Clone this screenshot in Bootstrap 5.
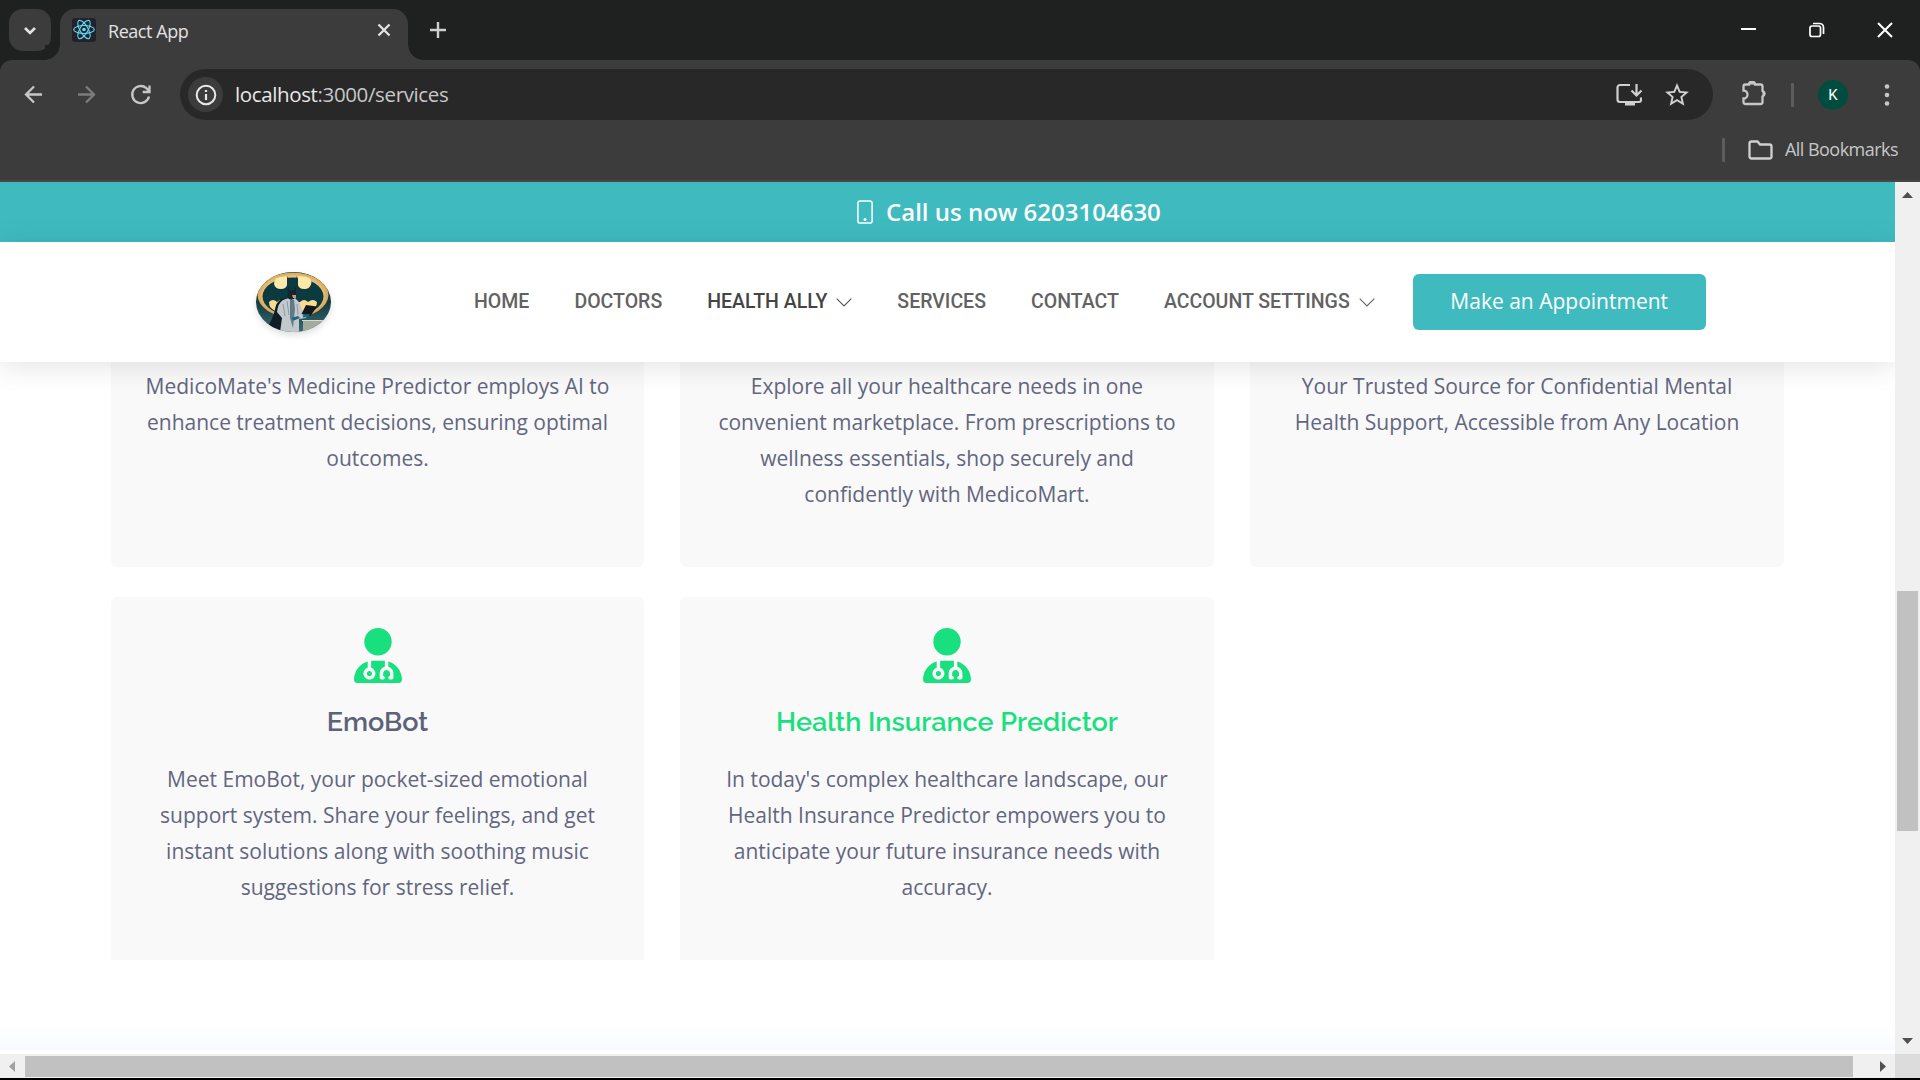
<!DOCTYPE html>
<html lang="en">
<head>
<meta charset="utf-8">
<title>React App</title>
<link href="https://cdn.jsdelivr.net/npm/bootstrap@5.3.0/dist/css/bootstrap.min.css" rel="stylesheet">
<style>
html,body{height:100%;overflow:hidden}
body{font-family:"Open Sans","Noto Sans",sans-serif;background:#fff;color:#444}
svg{display:block;flex:none}
.screen{width:1920px;height:1080px;background:#000}
.ui-font{font-family:"Open Sans","Noto Sans",sans-serif;white-space:nowrap}
/* browser chrome */
.tabstrip{height:60px;background:#1f2120;padding:9px 0 0 9px}
.tab-search{width:42px;height:42px;border-radius:14px;background:#3c3c3c}
.tab-active{position:relative;width:348px;height:51px;margin-left:9px;background:#3c3c3c;border-radius:15px 15px 0 0;padding:0 17px 9px 12px}
.tab-active:before,.tab-active:after{content:"";position:absolute;bottom:0;width:15px;height:15px}
.tab-active:before{left:-15px;background:radial-gradient(circle at 0 0,#1f2120 14.5px,#3c3c3c 15px)}
.tab-active:after{right:-15px;background:radial-gradient(circle at 100% 0,#1f2120 14.5px,#3c3c3c 15px)}
.tab-title{font-size:18px;line-height:24px;color:#e3e3e3;margin-left:12px;padding-top:2px;letter-spacing:-.45px}
.new-tab{margin:13px 0 0 22px}
.win-buttons{margin:12px 27px 0 0}
.toolbars{background:#1f2120}
.toolbars-in{background:#3c3c3c;border-radius:12px 12px 0 0;height:122px;border-bottom:2px solid #474747;padding-top:9px}
.toolbar-row{height:51px}
.omnibox{width:1533px;height:51px;border-radius:26px;background:#282828;padding:0 23px 0 8px}
.site-info{width:35px;height:35px;background:#3c3c3c}
.url{font-size:20.5px;line-height:30px;color:#c7c7c7;margin-left:12px;letter-spacing:-.37px;padding-bottom:2px}
.url span{color:#e8e8e8}
.vbar{width:3px;height:24px;background:#5d5d5d;border-radius:1px}
.avatar{width:30px;height:30px;background:#004d40;color:#fff;font:15px/30px Roboto,sans-serif;text-align:center}
.bookmarks{height:60px;padding-right:22px}
.bm-text{font-size:18px;color:#c7c7c7;letter-spacing:-.53px;padding-bottom:2px}
/* page */
.page-row{height:872px}
.page-view{width:1895px;background:#fff}
.callbar{height:60px;background:#3fbbc0;color:#fff;font-size:24px;font-weight:600;padding:0 0 0 857px;white-space:nowrap}
.site-header{position:relative;z-index:2;height:120px;background:#fff;box-shadow:0 3px 28px rgba(0,0,0,.12);padding-left:256px}
.site-nav{margin-left:143px;gap:45px;font:500 19.52px/30px Roboto,sans-serif;color:#626262;white-space:nowrap}
.site-nav .on{color:#444}
.btn-book{width:293px;height:56px;margin-left:38px;background:#3fbbc0;color:#fff;border-radius:6px;font-size:21px;border:0;padding:0 0 2px;line-height:54px}
.services{padding:0 110px 0 111px;display:grid;grid-template-columns:533px 534px 534px;column-gap:36px;row-gap:30px}
.svc{background:#f9f9f9;color:#62667f;text-align:center;font-size:21px;line-height:36px;white-space:nowrap}
.svc-cut{height:205px;padding-top:6px;border-radius:0 0 6px 6px}
.svc-full{height:363px;padding-top:31px;border-radius:6px 6px 0 0}
.svc-full svg{margin:0 auto 21px}
.svc h4{font-family:Raleway,Lato,sans-serif;font-weight:600;font-size:27px;line-height:36px;margin:0 0 21px;color:#5c627a}
.svc p{margin:0}
.svc .hot{color:#18e07f}
.next-shade{height:24px;background:linear-gradient(#fff,#f7fafd)}
.vscroll{position:relative;z-index:3;width:25px;background:#f0f0f0}
.vthumb{width:21px;height:240px;background:#c1c1c1}
.hscroll{height:24px;background:#f0f0f0}
.hthumb{width:1828px;height:21px;background:#c1c1c1;margin-left:10px}
.corner{width:25px;height:24px;background:#dcdcdc}
</style>
<script src="https://cdn.jsdelivr.net/npm/bootstrap@5.3.0/dist/js/bootstrap.bundle.min.js"></script>
</head>
<body>
<svg width="0" height="0" class="position-absolute"><defs>
<path id="doc" d="M224 256A128 128 0 1 0 224 0a128 128 0 1 0 0 256zm-96 55.2C54 332.9 0 401.3 0 482.3C0 498.7 13.3 512 29.7 512l388.6 0c16.4 0 29.7-13.3 29.7-29.7c0-81-54-149.4-128-171.1l0 50.8c27.6 7.1 48 32.2 48 62l0 40c0 8.8-7.2 16-16 16l-16 0c-8.8 0-16-7.2-16-16s7.2-16 16-16l0-24c0-17.7-14.3-32-32-32s-32 14.3-32 32l0 24c8.8 0 16 7.2 16 16s-7.2 16-16 16l-16 0c-8.8 0-16-7.2-16-16l0-40c0-29.8 20.4-54.9 48-62l0-57.1c-6-.6-12.1-.9-18.3-.9l-91.4 0c-6.2 0-12.3 .3-18.3 .9l0 65.4c23.1 6.9 40 28.3 40 53.7c0 30.9-25.1 56-56 56s-56-25.1-56-56c0-25.4 16.9-46.8 40-53.7l0-59.1zM144 448a24 24 0 1 0 0-48 24 24 0 1 0 0 48z"/>
</defs></svg>
<div class="screen d-flex flex-column">
  <div class="tabstrip ui-font d-flex">
    <div class="tab-search d-flex align-items-center justify-content-center"><svg width="14" height="9" viewBox="0 0 14 9"><path d="M2 2l5 5 5-5" fill="none" stroke="#e3e3e3" stroke-width="2.6"/></svg></div>
    <div class="tab-active d-flex align-items-center">
      <svg width="24" height="24" viewBox="0 0 24 24"><rect width="24" height="24" rx="3" fill="#20232a"/><g fill="none" stroke="#61dafb" stroke-width="1.1" transform="translate(12 11.5)"><ellipse rx="10.3" ry="4"/><ellipse rx="10.3" ry="4" transform="rotate(60)"/><ellipse rx="10.3" ry="4" transform="rotate(120)"/><circle r="1.8" fill="#61dafb" stroke="none"/></g></svg>
      <div class="tab-title">React App</div>
      <svg class="ms-auto" width="14" height="14" viewBox="0 0 14 14"><path d="M1.5 1.5l11 11M12.5 1.5l-11 11" stroke="#e3e3e3" stroke-width="2.3"/></svg>
    </div>
    <svg class="new-tab" width="16" height="16" viewBox="0 0 16 16"><path d="M8 0v16M0 8h16" stroke="#d0d0d0" stroke-width="2.4"/></svg>
    <div class="win-buttons d-flex ms-auto">
      <svg width="15" height="18"><path d="M0 8h15" stroke="#fff" stroke-width="2"/></svg>
      <svg class="ms-5 me-5" width="25" height="18"><g fill="none" stroke="#fff" stroke-width="1.7" transform="translate(5 1)"><rect x="1" y="4" width="10.5" height="10.5" rx="2"/><path d="M4 1.500h6.500a4 4 0 0 1 4 4v6.500"/></g></svg>
      <svg width="16" height="18"><path d="M1 2l14 14M15 2L1 16" stroke="#fff" stroke-width="2"/></svg>
    </div>
  </div>
  <div class="toolbars ui-font"><div class="toolbars-in">
    <div class="toolbar-row d-flex align-items-center">
      <svg width="156" height="22" viewBox="24 84 156 22" fill="none" stroke-width="2.3" stroke="#c7c7c7" style="margin-left:24px"><path d="M42 94.500H26M34 86.500l-8 8 8 8"/><path stroke="#7c7c7c" d="M78 94.500h16M86 86.500l8 8-8 8"/><path d="M149 96.500a8.500 8.500 0 1 1-2.600-8.300l3 3M149.500 85.500v6.500h-6.800"/></svg>
      <div class="omnibox d-flex align-items-center">
        <div class="site-info rounded-circle d-flex align-items-center justify-content-center"><svg width="22" height="22" viewBox="0 0 22 22"><circle cx="11" cy="11" r="9.3" fill="none" stroke="#e8e8e8" stroke-width="2"/><path d="M11 10v6M11 6v2" stroke="#e8e8e8" stroke-width="2.2"/></svg></div>
        <div class="url"><span>localhost</span>:3000/services</div>
        <svg class="ms-auto" width="26" height="24" viewBox="0 0 26 24"><path d="M14 2H4a2.500 2.500 0 0 0-2.500 2.500v12A2.500 2.500 0 0 0 4 19h19a2 2 0 0 0 2-2v-2.500" fill="none" stroke="#d0d0d0" stroke-width="2.2"/><path d="M9 19h10v3.500H9z" fill="#d0d0d0"/><path d="M20.500 1v11M15.500 7.500l5 5 5-5" fill="none" stroke="#d0d0d0" stroke-width="2.2"/></svg>
        <svg width="26" height="26" viewBox="0 0 24 24" style="margin-left:22px"><path fill="#d0d0d0" d="M22 9.240l-7.190-.62L12 2 9.190 8.630 2 9.240l5.460 4.730L5.820 21 12 17.270 18.180 21l-1.630-7.030L22 9.240zM12 15.400l-3.760 2.270 1-4.280-3.320-2.880 4.380-.38L12 6.100l1.710 4.040 4.380.38-3.320 2.880 1 4.280L12 15.400z" transform="translate(-1.2 -1.2) scale(1.1)"/></svg>
      </div>
      <svg width="27" height="27" viewBox="0 0 27 27" style="margin-left:27px"><path d="M5 4.500h3.500a3 3 0 0 1 6 0H20q2 0 2 2v4.500a3 3 0 0 1 0 5.500v5.500q0 2-2 2H5q-2 0-2-2v-3.500a4 4 0 0 0 0-8V6.500q0-2 2-2z" fill="none" stroke="#c7c7c7" stroke-width="2.3" transform="translate(.5 -1)"/><path d="M8.500 4.500a3 3 0 0 1 6 0zM22 10.500a3 3 0 0 1 0 6z" fill="#c7c7c7" transform="translate(.5 -1)"/></svg>
      <div class="vbar" style="margin-left:24px"></div>
      <div class="avatar rounded-circle" style="margin-left:24px">K</div>
      <svg width="6" height="24" style="margin-left:36px" fill="#c7c7c7"><circle cx="3" cy="3.5" r="2.3"/><circle cx="3" cy="12" r="2.3"/><circle cx="3" cy="20.5" r="2.3"/></svg>
    </div>
    <div class="bookmarks d-flex align-items-center justify-content-end">
      <div class="vbar"></div>
      <svg width="25" height="20" viewBox="0 0 25 20" style="margin:0 12px 0 23px"><path d="M3 1.500h6.500l2.500 3h9.500a2 2 0 0 1 2 2V16.500a2 2 0 0 1-2 2H3.500a2 2 0 0 1-2-2V3.300a2 2 0 0 1 2-1.800z" fill="none" stroke="#d0d0d0" stroke-width="2.3"/></svg>
      <div class="bm-text">All Bookmarks</div>
    </div>
  </div></div>
  <div class="page-row d-flex">
    <main class="page-view d-flex flex-column">
      <div class="callbar d-flex align-items-center"><svg width="16" height="24" viewBox="0 0 16 24"><rect x=".9" y=".9" width="14.2" height="22.2" rx="2.2" fill="none" stroke="#fff" stroke-width="1.5"/><circle cx="8" cy="19.5" r="1.5" fill="#fff"/></svg><span style="margin-left:13px">Call us now 6203104630</span></div>
      <header class="site-header d-flex align-items-center">
        <svg width="75" height="60" viewBox="0 0 75 60" style="filter:drop-shadow(0 3px 3px rgba(0,0,0,.13));overflow:visible">
          <defs><clipPath id="oval"><ellipse cx="37.5" cy="30" rx="37.5" ry="30"/></clipPath><radialGradient id="gold"><stop offset=".6" stop-color="#fff0b8"/><stop offset="1" stop-color="#d9a253"/></radialGradient><linearGradient id="wall" x2="0" y2="1"><stop offset=".5" stop-color="#123a42"/><stop offset="1" stop-color="#3b6b70"/></linearGradient></defs>
          <g clip-path="url(#oval)"><rect width="75" height="60" fill="url(#wall)"/>
          <ellipse cx="37" cy="23" rx="35.5" ry="22.500" fill="url(#gold)"/>
          <ellipse cx="37" cy="24.500" rx="30.500" ry="19" fill="#0b3a41"/>
          <path d="M20 6.500Q25 4 31 4.500L31 13q-1 4-6 4-6 0-7-5 0-3 2-5.500zM42 4.500q7-1 12 2 2 3 1 6-2 5-7 4.500-5 0-6-4z" fill="#ffe9a8"/>
          <path d="M31 3.500l1 4h8l1-4v12H31z" fill="#0b3a41"/>
          <path d="M13 30q4-4 8 0 4-4 8 0h15q4-4 8 0 5-4 9 0 0 6-7 9-8 4-17 4-15 0-22-7-2-2-2-6z" fill="#f9dc8e"/>
          <path d="M47 49h28v11H47z" fill="#a3aaa0"/><path d="M46 48.500h29" stroke="#ddd9c3"/>
          <path d="M29 26q-8 2-9.500 9Q17 47 12 54l12 6 6-12z" fill="#101d26"/>
          <path d="M27 28l6-2h6l5 5 2 7 5 5-1 3-7 1v13H24l2-14-5-6q1-9 6-12z" fill="#c1c9cd"/>
          <path d="M34 28h4l1 9-2 19-3-10z" fill="#5f7b86"/><path d="M27 32l2 12M31 29l2 14M41 32l1 11" stroke="#8c99a0"/>
          <path d="M32 14.500l1.500 4h4.500l2-4v10.500q-4 5-8.500 1z" fill="#15242d"/><path d="M36 23h4v3h-3z" fill="#c79a7d"/>
          <path d="M50 33l11 1.500-6.500 9.500-9-2z" fill="#15191f"/><path d="M35 46l7-2 2 2-6 2.500zM47 42.500l7-.5-2 3-5 .5z" fill="#1b6680"/></g>
        </svg>
        <nav class="site-nav d-flex align-items-center">
          <span>HOME</span><span>DOCTORS</span>
          <span class="on d-flex align-items-center">HEALTH ALLY<svg width="16" height="9" viewBox="0 0 16 9" style="margin-left:9px"><path d="M.7.7L8 8 15.300.7" fill="none" stroke="#555" stroke-width="1.1"/></svg></span>
          <span>SERVICES</span><span>CONTACT</span>
          <span class="d-flex align-items-center">ACCOUNT SETTINGS<svg width="16" height="9" viewBox="0 0 16 9" style="margin-left:9px"><path d="M.7.7L8 8 15.300.7" fill="none" stroke="#666" stroke-width="1.1"/></svg></span>
        </nav>
        <button class="btn btn-book">Make an Appointment</button>
      </header>
      <section class="services">
        <div class="svc svc-cut"><p>MedicoMate's Medicine Predictor employs AI to<br>enhance treatment decisions, ensuring optimal<br>outcomes.</p></div>
        <div class="svc svc-cut"><p>Explore all your healthcare needs in one<br>convenient marketplace. From prescriptions to<br>wellness essentials, shop securely and<br>confidently with MedicoMart.</p></div>
        <div class="svc svc-cut"><p>Your Trusted Source for Confidential Mental<br>Health Support, Accessible from Any Location</p></div>
        <div class="svc svc-full"><svg width="48" height="55" viewBox="0 0 448 512" fill="#18e07f"><use href="#doc"/></svg><h4>EmoBot</h4><p>Meet EmoBot, your pocket-sized emotional<br>support system. Share your feelings, and get<br>instant solutions along with soothing music<br>suggestions for stress relief.</p></div>
        <div class="svc svc-full"><svg width="48" height="55" viewBox="0 0 448 512" fill="#18e07f"><use href="#doc"/></svg><h4 class="hot">Health Insurance Predictor</h4><p>In today's complex healthcare landscape, our<br>Health Insurance Predictor empowers you to<br>anticipate your future insurance needs with<br>accuracy.</p></div>
      </section>
      <div class="next-shade mt-auto mb-1"></div>
    </main>
    <div class="vscroll d-flex flex-column align-items-center">
      <svg width="11" height="6" viewBox="0 0 11 6" style="margin-top:10px"><path d="M0 6L5.500 0 11 6z" fill="#505050"/></svg>
      <div class="vthumb" style="margin-top:393px"></div>
      <svg class="mt-auto" width="11" height="6" viewBox="0 0 11 6" style="margin-bottom:10px"><path d="M0 0L5.500 6 11 0z" fill="#505050"/></svg>
    </div>
  </div>
  <div class="hscroll d-flex align-items-center">
    <svg width="6" height="11" viewBox="0 0 6 11" style="margin-left:9px"><path d="M6 0L0 5.500 6 11z" fill="#a0a0a0"/></svg>
    <div class="hthumb"></div>
    <svg width="6" height="11" viewBox="0 0 6 11" style="margin-left:27px"><path d="M0 0L6 5.500 0 11z" fill="#505050"/></svg>
    <div class="corner ms-auto"></div>
  </div>
</div>
</body>
</html>
